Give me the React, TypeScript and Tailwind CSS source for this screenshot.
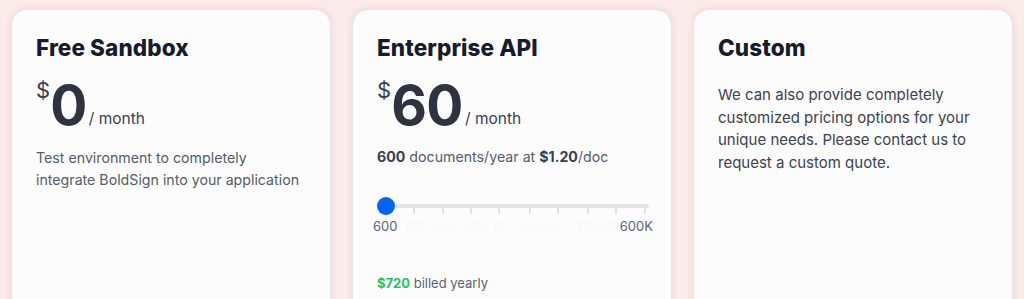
import React from "react";

const body = "font-['Inter','Liberation_Sans',sans-serif]";

function Card({ children }: { children: React.ReactNode }) {
  return (
    <div className="w-[320px] h-[330px] shrink-0 rounded-[16px] border border-[#e4e4ea] bg-[#fcfcfd] shadow-[0_0_6px_rgba(120,80,80,0.12)] px-[24px] pt-[22px]">
      {children}
    </div>
  );
}

function Heading({ children }: { children: React.ReactNode }) {
  return (
    <h2 className={`text-[22.5px] leading-[32px] font-extrabold tracking-[0.1px] text-[#161c2d] ${body}`}>{children}</h2>
  );
}

function Price({ value }: { value: string }) {
  return (
    <div className={`flex items-start mt-[10px] text-[#2f323f] ${body}`}>
      <span className="text-[22px] leading-none font-normal mt-[5px] text-[#3a3d4a]">$</span>
      <span className="text-[55px] leading-none font-bold tracking-[-0.5px] mt-[4px]">{value}</span>
      <span className="text-[15.5px] leading-none text-[#3d4150] self-end mb-[7px] ml-[2px]">/ month</span>
    </div>
  );
}

const ticks = [37, 66, 94, 122, 153, 181, 211, 239, 268];
const faint: [string, number][] = [
  ["100", 26],
  ["250", 54],
  ["500", 84],
  ["1K", 114],
  ["2.5K", 140],
  ["5K", 169],
  ["10K", 199],
  ["25", 226],
];

export default function App() {
  return (
    <div className="w-[1024px] h-[299px] overflow-hidden bg-[#fbeaea] flex gap-[21px] pl-[11px] pt-[9px]">
      <Card>
        <Heading>Free Sandbox</Heading>
        <Price value="0" />
        <p className={`mt-[14px] text-[14.2px] leading-[22px] text-[#555b6b] ${body}`}>
          Test environment to completely integrate BoldSign into your application
        </p>
      </Card>
      <Card>
        <Heading>Enterprise API</Heading>
        <Price value="60" />
        <p className={`mt-[13.5px] text-[14.2px] leading-[20px] text-[#555b6b] ${body}`}>
          <b className="font-bold text-[#3a3f4e]">600</b> documents/year at{" "}
          <b className="font-bold text-[#3a3f4e]">$1.20</b>/doc
        </p>
        <div className="relative mt-[28.5px] h-[44px]">
          <svg className="absolute left-0 top-0" width="276" height="22" viewBox="0 0 276 22">
            <rect x="9" y="9" width="263" height="4" rx="2" fill="#e3e4ea" />
            {ticks.map((t) => (
              <line key={t} x1={t} x2={t} y1="13" y2="19" stroke="#c3c7cf" strokeWidth="1" />
            ))}
          </svg>
          <div className="absolute left-0 top-[2px] w-[18px] h-[18px] rounded-full bg-[#0062ff]" />
          {faint.map(([l, x]) => (
            <span
              key={l}
              className={`absolute top-[22px] text-[13px] leading-[18px] text-[#f8f8fa] ${body}`}
              style={{ left: x }}
            >
              {l}
            </span>
          ))}
          <div className={`absolute left-[-4px] top-[22px] flex w-[280px] justify-between text-[13px] leading-[18px] text-[#5b6275] ${body}`}>
            <span>600</span>
            <span>600K</span>
          </div>
        </div>
        <p className={`mt-[34px] text-[13px] leading-[20px] text-[#5b6275] ${body}`}>
          <b className="font-bold text-[#22c55e]">$720</b> billed yearly
        </p>
      </Card>
      <Card>
        <Heading>Custom</Heading>
        <p className={`mt-[20px] text-[15px] leading-[22.7px] text-[#3d4150] ${body}`}>
          We can also provide completely customized pricing options for your unique needs. Please contact us to request a custom quote.
        </p>
      </Card>
    </div>
  );
}
